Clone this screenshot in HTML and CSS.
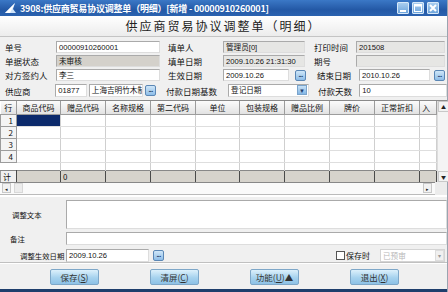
FILE: index.html
```html
<!DOCTYPE html>
<html lang="zh-CN">
<head>
    <meta charset="UTF-8">
    <title>供应商贸易协议调整单（明细）</title>
    <link rel="stylesheet" href="styles.css">
</head>
<body>
<div class="window">
    <div class="titlebar">
        <svg class="appicon" width="13" height="12" viewBox="0 0 13 12">
            <polygon points="1,11 11,1 9,7 12,11" fill="#cfe4fa"/>
            <polygon points="1,11 11,1 6,11" fill="#ffffff"/>
        </svg>
        <span class="title">3908:供应商贸易协议调整单（明细）[新增 - 00000910260001]</span>
        <div class="winbtns">
            <span class="wb"><svg width="12" height="12"><rect x="3" y="8" width="6" height="2" fill="#fff"/></svg></span>
            <span class="wb"><svg width="12" height="12"><rect x="2.5" y="2.5" width="7" height="7" fill="none" stroke="#fff"/><rect x="2.5" y="2.5" width="7" height="2" fill="#fff"/></svg></span>
            <span class="wb"><svg width="12" height="12"><path d="M3 3 L9 9 M9 3 L3 9" stroke="#fff" stroke-width="2"/></svg></span>
        </div>
    </div>

    <div class="heading">供应商贸易协议调整单（明细）</div>

    <div class="form">
        <div class="row">
            <span class="lbl l1">单号</span><span class="inp w1">00000910260001</span>
            <span class="lbl l2">填单人</span><span class="inp ro w2">管理员[0]</span>
            <span class="lbl l3">打印时间</span><span class="inp ro w3">201508</span>
        </div>
        <div class="row">
            <span class="lbl l1">单据状态</span><span class="inp dk w1">未审核</span>
            <span class="lbl l2">填单日期</span><span class="inp ro w2">2009.10.26 21:31:30</span>
            <span class="lbl l3">期号</span><span class="inp ro w3"></span>
        </div>
        <div class="row">
            <span class="lbl l1">对方签约人</span><span class="inp w1">李三</span>
            <span class="lbl l2">生效日期</span><span class="inp w2s">2009.10.26</span><span class="dots gap6">...</span>
            <span class="lbl l3b">结束日期</span><span class="inp w3s">2010.10.26</span><span class="dots gap4">...</span>
        </div>
        <div class="row tall">
            <span class="lbl l1">供应商</span><span class="inp wa">01877</span><span class="inp wb2">上海吉明竹木制</span><span class="dots gap2">...</span>
            <span class="lbl l2b">付款日期基数</span><span class="inp sel w2">登记日期<span class="arrow">▼</span></span>
            <span class="lbl l3">付款天数</span><span class="inp w3">10</span>
        </div>
    </div>

    <div class="grid">
        <div class="gridbody">
            <table class="tbl">
                <colgroup>
                    <col class="c-rn"><col class="c-44"><col class="c-45"><col class="c-45"><col class="c-45"><col class="c-44">
                    <col class="c-45"><col class="c-45"><col class="c-45"><col class="c-45"><col class="c-17">
                </colgroup>
                <thead>
                <tr><th>行</th><th>商品代码</th><th>赠品代码</th><th>名称规格</th><th>第二代码</th><th>单位</th><th>包装规格</th><th>赠品比例</th><th>牌价</th><th>正常折扣</th><th class="last">入</th></tr>
                </thead>
                <tbody>
                <tr><td class="rn">1</td><td class="cur"></td><td></td><td></td><td></td><td></td><td></td><td></td><td></td><td></td><td></td></tr>
                <tr><td class="rn">2</td><td></td><td></td><td></td><td></td><td></td><td></td><td></td><td></td><td></td><td></td></tr>
                <tr><td class="rn">3</td><td></td><td></td><td></td><td></td><td></td><td></td><td></td><td></td><td></td><td></td></tr>
                <tr><td class="rn">4</td><td></td><td></td><td></td><td></td><td></td><td></td><td></td><td></td><td></td><td></td></tr>
                <tr class="part"><td class="rn"></td><td></td><td></td><td></td><td></td><td></td><td></td><td></td><td></td><td></td><td></td></tr>
                <tr class="sum"><td class="rn">计</td><td></td><td>0</td><td></td><td></td><td></td><td></td><td></td><td></td><td></td><td></td></tr>
                </tbody>
            </table>
            <div class="vscroll">
                <span class="sbtn">▲</span>
                <span class="track"></span>
                <span class="sbtn">▼</span>
            </div>
        </div>
        <div class="hscroll">
            <span class="sbtn">◂</span>
            <span class="thumb"></span>
            <span class="htrack"></span>
            <span class="sbtn">▸</span>
            <span class="corner"></span>
        </div>
    </div>

    <div class="panel">
        <div class="prow textrow">
            <span class="plbl p12">调整文本</span><span class="area"></span>
        </div>
        <div class="prow">
            <span class="plbl p10">备注</span><span class="inp full"></span>
        </div>
        <div class="prow">
            <span class="plbl p21">调整生效日期</span><span class="inp wd">2009.10.26</span><span class="dots gap4">...</span>
            <span class="check"></span><span class="chklbl">保存时</span>
            <span class="inp sel dim">已预审<span class="arrow pale">▾</span></span>
        </div>
    </div>

    <div class="buttons">
        <button class="btn">保存(<u>S</u>)</button>
        <button class="btn">清屏(<u>C</u>)</button>
        <button class="btn">功能(<u>U</u>)▲</button>
        <button class="btn">退出(<u>X</u>)</button>
    </div>
    <div class="footer"></div>
</div>
</body>
</html>
```

FILE: styles.css
```css
* {
    box-sizing: border-box;
}
body {
    margin: 0;
    width: 448px;
    height: 292px;
    overflow: hidden;
    font-family: "Noto Sans CJK SC", "Liberation Sans", sans-serif;
    font-size: 8px;
    color: #111;
    background: #f0f0f0;
}
.window {
    width: 448px;
    height: 292px;
    display: flex;
    flex-direction: column;
    background: #f0f0f0;
    border-right: 1px solid #9aa4b0;
}

/* title bar */
.titlebar {
    height: 16px;
    display: flex;
    align-items: center;
    padding-left: 4px;
    background: linear-gradient(#3b78c6, #2459a6 60%, #2b63b0);
    color: #fff;
}
.appicon {
    flex: none;
}
.title {
    margin-left: 3px;
    font-size: 9px;
    font-weight: bold;
    white-space: nowrap;
    letter-spacing: -0.2px;
}
.winbtns {
    margin-left: auto;
    display: flex;
    gap: 3px;
    padding-right: 8px;
}
.wb {
    width: 12px;
    height: 12px;
    display: block;
    background: linear-gradient(#a9cdef, #6ea5dc);
    border: 1px solid #d6e8f8;
    border-radius: 1px;
    overflow: hidden;
}
.wb svg {
    display: block;
    margin: -1px 0 0 -1px;
}

.heading {
    height: 21px;
    line-height: 20px;
    text-align: center;
    font-size: 12px;
    letter-spacing: 2px;
    color: #222;
    background: linear-gradient(#ffffff, #ececec);
    border-bottom: 1px solid #c4c4c4;
}

/* header form */
.form {
    padding-top: 3px;
    height: 62px;
}
.row {
    height: 14px;
    display: flex;
    align-items: center;
}
.row.tall {
    height: 15px;
    margin-top: 1px;
}
.lbl {
    font-size: 8.5px;
    white-space: nowrap;
    overflow: hidden;
}
.l1 {
    width: 56px;
    padding-left: 5px;
}
.l2 {
    width: 57px;
    margin-left: 6px;
    padding-left: 2px;
}
.l2b {
    width: 65px;
    margin-left: 8px;
    padding-left: 2px;
}
.l3 {
    width: 51px;
    margin-left: 0;
    padding-left: 9px;
}
.l3b {
    width: 53px;
    margin-left: 0;
    padding-left: 11px;
}
.inp {
    height: 12px;
    line-height: 11px;
    padding-left: 2px;
    background: #fff;
    border: 1px solid #aaa;
    border-right-color: #ddd;
    border-bottom-color: #ddd;
    font-family: "Liberation Sans", "Noto Sans CJK SC", sans-serif;
    font-size: 7.6px;
    white-space: nowrap;
    overflow: hidden;
    position: relative;
}
.row.tall .inp {
    height: 13px;
}
.ro {
    background: #e6e6e4;
}
.dk {
    background: #d4d1cb;
}
.w1 { width: 104px; }
.w2 { width: 82px; }
.w3 { width: 89px; }
.w2s { width: 66px; }
.w3s { width: 71px; }
.wa { width: 32px; }
.wb2 { width: 55px; margin-left: 2px; }

.dots {
    width: 11px;
    height: 11px;
    line-height: 7px;
    text-align: center;
    font-family: "Liberation Sans", sans-serif;
    font-size: 7px;
    font-weight: bold;
    letter-spacing: -0.6px;
    color: #1b3766;
    background: linear-gradient(#cfe6f8, #8dbde8);
    border: 1px solid #5b87b5;
    border-radius: 2px;
}
.gap2 { margin-left: 2px; }
.gap4 { margin-left: 4px; }
.gap6 { margin-left: 6px; }

.sel .arrow {
    position: absolute;
    right: 1px;
    top: 0;
    width: 10px;
    height: 10px;
    line-height: 10px;
    text-align: center;
    font-size: 6px;
    color: #1d3d6a;
    background: linear-gradient(#c8e1f6, #84b6e4);
    border: 1px solid #7aa4cc;
}

/* grid */
.grid {
    height: 96px;
    margin-top: 1px;
    border-top: 1px solid #8a8a8a;
    background: #fff;
}
.gridbody {
    display: flex;
    height: 81px;
}
.tbl {
    width: 436px;
    table-layout: fixed;
    border-collapse: collapse;
    font-size: 8px;
}
.c-rn { width: 16px; }
.c-44 { width: 44px; }
.c-45 { width: 45px; }
.c-17 { width: 17px; }
.tbl th {
    height: 13px;
    padding: 0;
    font-weight: normal;
    white-space: nowrap;
    overflow: hidden;
    background: linear-gradient(#fbfbfb, #e2e2e2);
    border-right: 1px solid #9c9c9c;
    border-bottom: 1px solid #9c9c9c;
}
.tbl th.last {
    text-align: left;
    padding-left: 2px;
}
.tbl td {
    height: 12px;
    padding: 0 0 0 2px;
    border-right: 1px solid #cfcfcf;
    border-bottom: 1px solid #dedede;
    white-space: nowrap;
    overflow: hidden;
}
.tbl td.rn {
    text-align: right;
    padding-right: 3px;
    background: #f4f4f4;
    border: 1px solid #9c9c9c;
    border-top-color: #fff;
}
.tbl td.cur {
    background: #0c2a6c;
}
.tbl tr.part td {
    height: 8px;
    border-bottom: 0;
}
.tbl tr.part td.rn {
    background: #fff;
    border: 0;
}
.tbl tr.sum td {
    height: 12px;
    background: #d6d3cc;
    border-top: 1px solid #888;
    border-right: 1px solid #4a4a4a;
    border-bottom: 1px solid #888;
}
.tbl tr.sum td.rn {
    text-align: left;
    padding-left: 2px;
    background: #f0f0f0;
}
.vscroll {
    width: 12px;
    display: flex;
    flex-direction: column;
    background: #f4f4f4;
    border-left: 1px solid #ddd;
}
.vscroll .track {
    flex: 1;
}
.sbtn {
    width: 11px;
    height: 11px;
    line-height: 10px;
    text-align: center;
    font-size: 5px;
    color: #222;
    background: #f2f2f2;
    border: 1px solid #c8c8c8;
}
.hscroll {
    height: 13px;
    display: flex;
    align-items: center;
    padding-left: 2px;
    background: #fafafa;
    border-bottom: 1px solid #bbb;
}
.hscroll .sbtn {
    width: 9px;
    height: 10px;
}
.thumb {
    width: 9px;
    height: 10px;
    margin-left: 3px;
    background: #ececec;
    border: 1px solid #d8d8d8;
}
.htrack {
    flex: 1;
}
.corner {
    width: 12px;
    height: 13px;
    margin-left: 3px;
    background: #ececec;
}

/* bottom panel */
.panel {
    height: 67px;
    padding-top: 3px;
    border-top: 1px solid #fff;
    border-bottom: 1px solid #c0c0c0;
}
.prow {
    display: flex;
    align-items: center;
    height: 15px;
    margin-bottom: 2px;
}
.prow.textrow {
    height: 29px;
    margin-bottom: 2px;
}
.plbl {
    width: 66px;
    font-size: 7.4px;
    white-space: nowrap;
}
.p12 { padding-left: 12px; }
.p10 { padding-left: 10px; }
.p21 { padding-left: 20px; }
.area {
    width: 381px;
    height: 29px;
    background: #fff;
    border: 1px solid #aaa;
    border-right-color: #ddd;
    border-bottom-color: #ddd;
}
.full {
    width: 381px;
    height: 13px;
}
.wd {
    width: 83px;
    height: 13px;
}
.check {
    width: 9px;
    height: 9px;
    margin-left: 172px;
    background: #fff;
    border: 1px solid #555;
}
.chklbl {
    margin-left: 1px;
    font-size: 8px;
}
.dim {
    width: 65px;
    height: 13px;
    margin-left: 10px;
    color: #b8b8b8;
    border-color: #d4d4d4;
    font-family: "Noto Sans CJK SC", sans-serif;
}
.sel .arrow.pale {
    width: 9px;
    height: 11px;
    right: 0;
    color: #999;
    background: #f0f0f0;
    border-color: #ddd;
}

/* buttons */
.buttons {
    height: 26px;
    display: flex;
    align-items: center;
    gap: 51px;
    padding-left: 50px;
    border-top: 1px solid #fff;
}
.btn {
    width: 49px;
    height: 16px;
    padding: 0;
    font-family: "Noto Sans CJK SC", "Liberation Sans", sans-serif;
    font-size: 8.5px;
    color: #333;
    background: linear-gradient(#dcf0fb, #a6d2ee 55%, #8ec2e6);
    border: 1px solid #7ea7c8;
    border-radius: 2px;
}
.btn u {
    text-decoration: underline;
}
.footer {
    flex: 1;
    background: #1e3e6c;
}
```
